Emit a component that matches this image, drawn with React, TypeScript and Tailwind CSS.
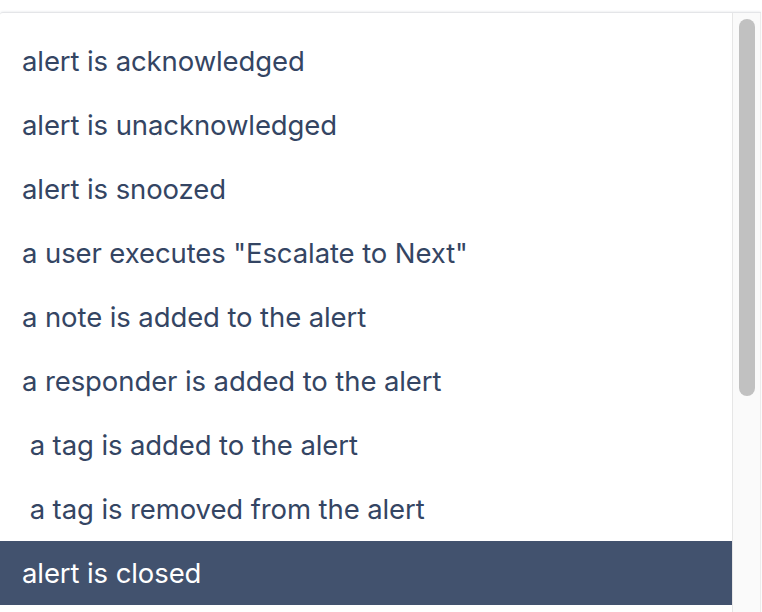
import React from "react";

const items = [
  "alert is acknowledged",
  "alert is unacknowledged",
  "alert is snoozed",
  'a user executes "Escalate to Next"',
  "a note is added to the alert",
  "a responder is added to the alert",
  " a tag is added to the alert",
  " a tag is removed from the alert",
  "alert is closed",
];

export default function App() {
  return (
    <div className="w-[762px] h-[612px] bg-white pt-[12px] overflow-hidden" style={{ fontFamily: "Inter, 'Noto Sans', sans-serif" }}>
      <div className="w-[761px] h-[600px] flex rounded-tl-[3px] border-t border-[#e4e5e8] shadow-[0_-1px_2px_rgba(9,30,66,0.06)] bg-white">
        <div className="flex-1 pt-[16px]">
          {items.map((t, i) => {
            const sel = i === items.length - 1;
            return (
              <div
                key={i}
                className={`h-[64px] flex items-center pl-[22px] pt-[2px] text-[27.5px] whitespace-pre tracking-[-0.1px] ${sel ? "bg-[#42526e] text-white" : "text-[#344563]"}`}
              >
                {t}
              </div>
            );
          })}
        </div>
        <div className="w-[29px] border-l border-[#e6e6e6] border-r border-r-[#ececec] bg-[#fafafa] pt-[6px] flex justify-center">
          <div className="w-[16px] h-[377px] rounded-full bg-[#c1c1c1]" />
        </div>
      </div>
    </div>
  );
}
